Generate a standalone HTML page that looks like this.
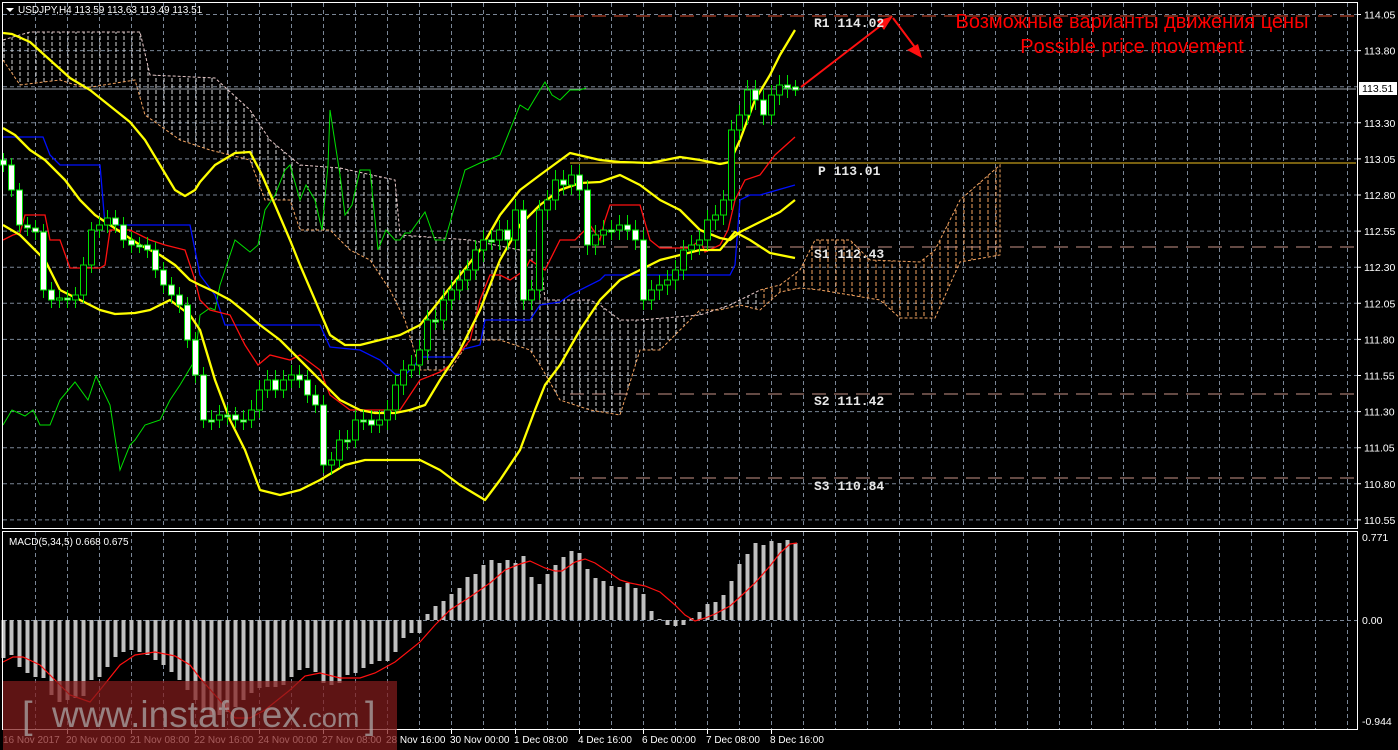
<!DOCTYPE html>
<html><head><meta charset="utf-8"><style>
html,body{margin:0;padding:0;background:#000;}
svg{display:block}
.s{font-family:"Liberation Sans",sans-serif;}
.m{font-family:"Liberation Mono",monospace;font-weight:bold;font-size:13px;fill:#e8e8e8;}
</style></head><body>
<svg width="1398" height="750" viewBox="0 0 1398 750" xmlns="http://www.w3.org/2000/svg">
<defs>
<pattern id="cl" width="8" height="6" patternUnits="userSpaceOnUse">
<line x1="4" y1="0" x2="4" y2="4" stroke="#d8d8d8" stroke-width="1"/>
</pattern>
<pattern id="cl2" width="8" height="6" patternUnits="userSpaceOnUse">
<line x1="4" y1="0" x2="4" y2="4" stroke="#f4a460" stroke-width="1"/>
</pattern>
</defs>
<rect width="1398" height="750" fill="#000"/>
<g stroke="#7a8696" stroke-width="1" stroke-dasharray="4,3">
<path d="M3 14.5H1357M3 50.6H1357M3 86.7H1357M3 122.8H1357M3 158.9H1357M3 195H1357M3 231.1H1357M3 267.2H1357M3 303.3H1357M3 339.4H1357M3 375.5H1357M3 411.6H1357M3 447.7H1357M3 483.8H1357M3 519.9H1357M3 620.5H1357"/>
<path d="M35.5 3V528M67.5 3V528M99.5 3V528M131.5 3V528M163.5 3V528M195.5 3V528M227.5 3V528M259.5 3V528M291.5 3V528M323.5 3V528M355.5 3V528M387.5 3V528M419.5 3V528M451.5 3V528M483.5 3V528M515.5 3V528M547.5 3V528M579.5 3V528M611.5 3V528M643.5 3V528M675.5 3V528M707.5 3V528M739.5 3V528M771.5 3V528M803.5 3V528M835.5 3V528M867.5 3V528M899.5 3V528M931.5 3V528M963.5 3V528M995.5 3V528M1027.5 3V528M1059.5 3V528M1091.5 3V528M1123.5 3V528M1155.5 3V528M1187.5 3V528M1219.5 3V528M1251.5 3V528M1283.5 3V528M1315.5 3V528M1347.5 3V528"/>
<path d="M35.5 532V729M67.5 532V729M99.5 532V729M131.5 532V729M163.5 532V729M195.5 532V729M227.5 532V729M259.5 532V729M291.5 532V729M323.5 532V729M355.5 532V729M387.5 532V729M419.5 532V729M451.5 532V729M483.5 532V729M515.5 532V729M547.5 532V729M579.5 532V729M611.5 532V729M643.5 532V729M675.5 532V729M707.5 532V729M739.5 532V729M771.5 532V729M803.5 532V729M835.5 532V729M867.5 532V729M899.5 532V729M931.5 532V729M963.5 532V729M995.5 532V729M1027.5 532V729M1059.5 532V729M1091.5 532V729M1123.5 532V729M1155.5 532V729M1187.5 532V729M1219.5 532V729M1251.5 532V729M1283.5 532V729M1315.5 532V729M1347.5 532V729"/>
</g>
<!-- cloud -->
<polygon fill="url(#cl)" fill-rule="evenodd" points="3,40 30,32 140,32 150,75 215,78 250,110 270,140 300,165 340,168 395,180 400,235 470,240 520,250 540,250 545,300 590,300 600,305 620,320 640,320 700,315 730,305 760,290 760,310 740,305 720,310 700,310 680,330 660,350 640,350 620,415 590,410 560,400 540,365 530,350 500,340 470,340 450,370 420,370 405,320 390,290 370,260 350,250 330,230 300,230 290,200 265,200 250,160 210,150 180,140 145,115 135,80 85,88 60,80 20,85 3,60"/>
<polygon fill="url(#cl2)" points="760,290 780,285 800,270 815,240 850,240 870,260 920,262 935,250 960,200 1000,165 1000,255 960,262 935,318 900,318 880,300 820,290 800,288 780,292 760,310"/>
<polyline fill="none" stroke="#e8c8c8" stroke-width="1" stroke-dasharray="3,2" points="3,40 30,32 140,32 150,75 215,78 250,110 270,140 300,165 340,168 395,180 400,235 470,240 520,250 540,250 545,300 590,300 600,305 620,320 640,320 700,315 730,305 760,290"/>
<polyline fill="none" stroke="#f4a460" stroke-width="1" stroke-dasharray="3,2" points="3,60 20,85 60,80 85,88 135,80 145,115 180,140 210,150 250,160 265,200 290,200 300,230 330,230 350,250 370,260 390,290 405,320 420,370 450,370 470,340 500,340 530,350 540,365 560,400 590,410 620,415 640,350 660,350 680,330 700,310 720,310 740,305 760,310 780,292 800,288 820,290 880,300 900,318 935,318 960,262 1000,255 1000,165 960,200 935,250 920,262 870,260 850,240 815,240 800,270 780,285 760,290"/>
<!-- pivots -->
<line x1="570" y1="16" x2="1356" y2="16" stroke="#e05030" stroke-dasharray="14,8"/>
<line x1="570" y1="163" x2="1356" y2="163" stroke="#f0c020"/>
<line x1="570" y1="247" x2="1356" y2="247" stroke="#c89488" stroke-dasharray="14,8"/>
<line x1="570" y1="394" x2="1356" y2="394" stroke="#c89488" stroke-dasharray="14,8"/>
<line x1="570" y1="478" x2="1356" y2="478" stroke="#c89488" stroke-dasharray="14,8"/>
<line x1="2" y1="89" x2="1356" y2="89" stroke="#9aa0a8"/>
<!-- green chikou -->
<polyline fill="none" stroke="#00e000" stroke-width="1" points="3,425 12,410 25,416 33,410 40,425 50,425 60,400 75,382 88,400 96,376 110,405 120,470 130,445 135,440 145,425 160,420 170,400 180,385 195,360 200,315 210,308 215,310 220,285 235,240 250,252 258,245 265,210 275,195 285,170 290,165 300,200 306,185 315,200 322,230 328,165 330,110 340,175 345,215 352,205 360,170 370,170 378,250 386,230 395,240 400,240 405,233 410,233 425,212 435,240 445,240 465,170 480,163 500,155 520,105 528,110 540,90 545,82 552,95 560,100 570,90 580,90 586,88"/>
<!-- blue kijun -->
<polyline fill="none" stroke="#0010ff" stroke-width="1.3" points="3,137 43,137 50,155 60,165 100,165 105,225 190,225 200,275 215,295 225,325 320,325 330,347 360,350 380,360 395,374 405,375 415,365 420,357 455,357 460,350 480,345 485,320 530,320 540,305 560,302 570,295 600,280 605,275 730,275 735,265 740,200 750,195 760,195 795,185"/>
<!-- red tenkan -->
<polyline fill="none" stroke="#ff1010" stroke-width="1.3" points="3,240 13,235 20,233 25,215 45,215 50,240 60,240 70,268 100,268 105,265 110,230 130,230 150,240 165,245 185,250 195,280 200,300 210,310 230,315 245,345 258,365 270,355 290,360 300,355 320,370 330,395 350,410 380,410 400,410 420,380 440,372 450,365 458,355 470,340 480,300 490,275 500,275 510,280 525,270 530,260 545,270 560,240 575,240 590,225 600,240 605,220 610,205 640,205 650,240 660,248 690,248 700,240 705,252 720,245 728,230 735,200 745,180 760,175 775,155 795,137"/>
<!-- bollinger -->
<g fill="none" stroke="#ffff00" stroke-width="2.3" stroke-linejoin="round">
<polyline points="3,33 12,34 30,42 50,60 70,78 90,90 100,98 115,110 130,122 145,140 160,165 175,190 185,196 195,190 200,182 215,165 235,153 250,152 262,175 275,205 290,240 300,265 315,300 330,335 345,345 360,345 380,340 400,335 420,325 440,300 460,275 480,250 500,215 520,190 540,175 570,153 600,160 620,162 650,163 680,157 700,160 720,164 730,162 740,140 755,100 770,75 780,55 795,30"/>
<polyline points="3,128 15,135 30,150 45,160 55,170 65,180 80,200 95,215 110,225 125,235 140,245 160,255 175,265 190,280 200,285 215,292 230,300 245,312 260,325 280,340 300,360 320,380 340,400 360,410 375,413 395,413 410,410 425,405 440,380 460,350 480,310 500,260 520,225 540,205 560,190 580,183 600,182 620,175 640,185 660,200 680,210 700,230 720,238 730,240 740,232 760,222 780,212 795,200"/>
<polyline points="3,225 20,235 35,250 45,260 60,290 80,300 100,310 115,314 135,313 150,310 170,300 190,315 200,330 215,380 230,420 245,450 260,490 280,495 300,490 320,480 345,465 365,460 390,460 420,460 440,470 460,485 485,500 500,480 520,450 535,410 545,385 560,365 580,330 600,300 620,280 640,270 660,260 680,255 700,250 720,250 735,232 750,240 770,253 795,258"/>
</g>
<!-- candles -->
<path fill="none" stroke="#00e000" stroke-width="1" d="M3.5 153V172M11.5 158V197M19.5 183V232M27.5 217V236M35.5 220V240M43.5 224V298M51.5 282V308M59.5 290V308M67.5 290V308M75.5 287V308M83.5 257V303M91.5 222V273M99.5 217V238M107.5 210V233M115.5 210V233M123.5 217V248M131.5 232V253M139.5 237V253M147.5 237V258M155.5 242V278M163.5 262V293M171.5 277V303M179.5 287V313M187.5 297V348M195.5 332V383M203.5 367V428M211.5 410V430M219.5 405V428M227.5 405V425M235.5 407V428M243.5 410V430M251.5 400V428M259.5 380V418M267.5 370V398M275.5 370V398M283.5 370V398M291.5 365V388M299.5 365V388M307.5 370V403M315.5 385V413M323.5 395V473M331.5 452V475M339.5 430V468M347.5 430V450M355.5 410V448M363.5 410V430M371.5 410V433M379.5 410V433M387.5 400V430M395.5 375V420M403.5 360V395M411.5 355V378M419.5 340V375M427.5 310V360M435.5 310V330M443.5 290V330M451.5 280V310M459.5 270V300M467.5 260V290M475.5 240V280M483.5 230V262M491.5 230V250M499.5 220V250M507.5 220V250M515.5 200V250M523.5 200V310M531.5 280V310M539.5 200V300M547.5 190V220M555.5 170V210M563.5 170V195M571.5 165V195M579.5 165V200M587.5 180V255M595.5 225V255M603.5 220V245M611.5 220V240M619.5 215V240M627.5 215V240M635.5 220V250M643.5 230V310M651.5 280V310M659.5 275V300M667.5 270V295M675.5 260V290M683.5 240V280M691.5 235V260M699.5 230V255M707.5 210V250M715.5 205V230M723.5 190V225M731.5 120V210M739.5 105V140M747.5 80V125M755.5 80V110M763.5 90V125M771.5 85V125M779.5 75V105M787.5 75V98M795.5 80V96"/>
<g fill="#fff" stroke="#00e000" stroke-width="1">
<rect x="0.5" y="160" width="6" height="5"/><rect x="8.5" y="165" width="6" height="25"/><rect x="16.5" y="190" width="6" height="35"/><rect x="24.5" y="225" width="6" height="3"/><rect x="32.5" y="228" width="6" height="4"/><rect x="40.5" y="232" width="6" height="58"/><rect x="48.5" y="290" width="6" height="10"/><rect x="64.5" y="298" width="6" height="2"/><rect x="112.5" y="218" width="6" height="7"/><rect x="120.5" y="225" width="6" height="15"/><rect x="128.5" y="240" width="6" height="5"/><rect x="136.5" y="245" width="6" height="2"/><rect x="144.5" y="245" width="6" height="5"/><rect x="152.5" y="250" width="6" height="20"/><rect x="160.5" y="270" width="6" height="15"/><rect x="168.5" y="285" width="6" height="10"/><rect x="176.5" y="295" width="6" height="10"/><rect x="184.5" y="305" width="6" height="35"/><rect x="192.5" y="340" width="6" height="35"/><rect x="200.5" y="375" width="6" height="45"/><rect x="208.5" y="420" width="6" height="2"/><rect x="224.5" y="415" width="6" height="2"/><rect x="232.5" y="415" width="6" height="5"/><rect x="240.5" y="420" width="6" height="2"/><rect x="272.5" y="380" width="6" height="10"/><rect x="296.5" y="375" width="6" height="5"/><rect x="304.5" y="380" width="6" height="15"/><rect x="312.5" y="395" width="6" height="10"/><rect x="320.5" y="405" width="6" height="60"/><rect x="344.5" y="440" width="6" height="2"/><rect x="360.5" y="420" width="6" height="2"/><rect x="368.5" y="420" width="6" height="5"/><rect x="432.5" y="320" width="6" height="2"/><rect x="488.5" y="240" width="6" height="2"/><rect x="504.5" y="230" width="6" height="10"/><rect x="520.5" y="210" width="6" height="90"/><rect x="560.5" y="180" width="6" height="5"/><rect x="576.5" y="175" width="6" height="15"/><rect x="584.5" y="190" width="6" height="55"/><rect x="608.5" y="230" width="6" height="2"/><rect x="624.5" y="225" width="6" height="5"/><rect x="632.5" y="230" width="6" height="10"/><rect x="640.5" y="240" width="6" height="60"/><rect x="752.5" y="90" width="6" height="10"/><rect x="760.5" y="100" width="6" height="15"/><rect x="784.5" y="85" width="6" height="3"/><rect x="792.5" y="87" width="6" height="3"/>
</g>
<g fill="#000" stroke="#00e000" stroke-width="1">
<rect x="56.5" y="298" width="6" height="2"/><rect x="72.5" y="295" width="6" height="5"/><rect x="80.5" y="265" width="6" height="30"/><rect x="88.5" y="230" width="6" height="35"/><rect x="96.5" y="225" width="6" height="5"/><rect x="104.5" y="218" width="6" height="7"/><rect x="216.5" y="415" width="6" height="5"/><rect x="248.5" y="410" width="6" height="10"/><rect x="256.5" y="390" width="6" height="20"/><rect x="264.5" y="380" width="6" height="10"/><rect x="280.5" y="380" width="6" height="10"/><rect x="288.5" y="375" width="6" height="5"/><rect x="328.5" y="460" width="6" height="5"/><rect x="336.5" y="440" width="6" height="20"/><rect x="352.5" y="420" width="6" height="20"/><rect x="376.5" y="420" width="6" height="5"/><rect x="384.5" y="410" width="6" height="10"/><rect x="392.5" y="385" width="6" height="25"/><rect x="400.5" y="370" width="6" height="15"/><rect x="408.5" y="365" width="6" height="5"/><rect x="416.5" y="350" width="6" height="15"/><rect x="424.5" y="320" width="6" height="30"/><rect x="440.5" y="300" width="6" height="20"/><rect x="448.5" y="290" width="6" height="10"/><rect x="456.5" y="280" width="6" height="10"/><rect x="464.5" y="270" width="6" height="10"/><rect x="472.5" y="250" width="6" height="20"/><rect x="480.5" y="240" width="6" height="10"/><rect x="496.5" y="230" width="6" height="10"/><rect x="512.5" y="210" width="6" height="30"/><rect x="528.5" y="290" width="6" height="10"/><rect x="536.5" y="210" width="6" height="80"/><rect x="544.5" y="200" width="6" height="10"/><rect x="552.5" y="180" width="6" height="20"/><rect x="568.5" y="175" width="6" height="10"/><rect x="592.5" y="235" width="6" height="10"/><rect x="600.5" y="230" width="6" height="5"/><rect x="616.5" y="225" width="6" height="5"/><rect x="648.5" y="290" width="6" height="10"/><rect x="656.5" y="285" width="6" height="5"/><rect x="664.5" y="280" width="6" height="5"/><rect x="672.5" y="270" width="6" height="10"/><rect x="680.5" y="250" width="6" height="20"/><rect x="688.5" y="245" width="6" height="5"/><rect x="696.5" y="240" width="6" height="5"/><rect x="704.5" y="220" width="6" height="20"/><rect x="712.5" y="215" width="6" height="5"/><rect x="720.5" y="200" width="6" height="15"/><rect x="728.5" y="130" width="6" height="70"/><rect x="736.5" y="115" width="6" height="15"/><rect x="744.5" y="90" width="6" height="25"/><rect x="768.5" y="95" width="6" height="20"/><rect x="776.5" y="85" width="6" height="10"/>
</g>
<!-- arrows -->
<g stroke="#ff1010" stroke-width="2" fill="#ff1010">
<line x1="801" y1="87" x2="888" y2="20"/>
<polygon points="893,16 877,21 884,30" stroke="none"/>
<line x1="893" y1="18" x2="920" y2="54"/>
<polygon points="922,58 907,50 918,44" stroke="none"/>
</g>
<text class="s" x="1132" y="28" fill="#ff0000" font-size="20" text-anchor="middle">Возможные варианты движения цены</text>
<text class="s" x="1132" y="53" fill="#ff0000" font-size="20" text-anchor="middle">Possible price movement</text>
<text class="m" x="814" y="27">R1 114.02</text>
<text class="m" x="818" y="175">P 113.01</text>
<text class="m" x="814" y="258">S1 112.43</text>
<text class="m" x="814" y="405">S2 111.42</text>
<text class="m" x="814" y="490">S3 110.84</text>
<!-- macd -->
<g fill="#c0c0c0">
<rect x="1.5" y="620" width="4" height="38"/><rect x="9.5" y="620" width="4" height="35"/><rect x="17.5" y="620" width="4" height="47"/><rect x="25.5" y="620" width="4" height="53"/><rect x="33.5" y="620" width="4" height="57"/><rect x="41.5" y="620" width="4" height="58"/><rect x="49.5" y="620" width="4" height="75"/><rect x="57.5" y="620" width="4" height="82"/><rect x="65.5" y="620" width="4" height="80"/><rect x="73.5" y="620" width="4" height="78"/><rect x="81.5" y="620" width="4" height="76"/><rect x="89.5" y="620" width="4" height="60"/><rect x="97.5" y="620" width="4" height="57"/><rect x="105.5" y="620" width="4" height="47"/><rect x="113.5" y="620" width="4" height="37"/><rect x="121.5" y="620" width="4" height="32"/><rect x="129.5" y="620" width="4" height="30"/><rect x="137.5" y="620" width="4" height="32"/><rect x="145.5" y="620" width="4" height="35"/><rect x="153.5" y="620" width="4" height="40"/><rect x="161.5" y="620" width="4" height="45"/><rect x="169.5" y="620" width="4" height="52"/><rect x="177.5" y="620" width="4" height="60"/><rect x="185.5" y="620" width="4" height="70"/><rect x="193.5" y="620" width="4" height="80"/><rect x="201.5" y="620" width="4" height="90"/><rect x="209.5" y="620" width="4" height="95"/><rect x="217.5" y="620" width="4" height="95"/><rect x="225.5" y="620" width="4" height="92"/><rect x="233.5" y="620" width="4" height="87"/><rect x="241.5" y="620" width="4" height="80"/><rect x="249.5" y="620" width="4" height="73"/><rect x="257.5" y="620" width="4" height="68"/><rect x="265.5" y="620" width="4" height="67"/><rect x="273.5" y="620" width="4" height="67"/><rect x="281.5" y="620" width="4" height="65"/><rect x="289.5" y="620" width="4" height="57"/><rect x="297.5" y="620" width="4" height="50"/><rect x="305.5" y="620" width="4" height="48"/><rect x="313.5" y="620" width="4" height="52"/><rect x="321.5" y="620" width="4" height="63"/><rect x="329.5" y="620" width="4" height="65"/><rect x="337.5" y="620" width="4" height="63"/><rect x="345.5" y="620" width="4" height="55"/><rect x="353.5" y="620" width="4" height="53"/><rect x="361.5" y="620" width="4" height="48"/><rect x="369.5" y="620" width="4" height="44"/><rect x="377.5" y="620" width="4" height="41"/><rect x="385.5" y="620" width="4" height="41"/><rect x="393.5" y="620" width="4" height="32"/><rect x="401.5" y="620" width="4" height="18"/><rect x="409.5" y="620" width="4" height="13"/><rect x="417.5" y="620" width="4" height="13"/>
<rect x="425.5" y="614" width="4" height="6"/><rect x="433.5" y="606" width="4" height="14"/><rect x="441.5" y="601" width="4" height="19"/><rect x="449.5" y="594" width="4" height="26"/><rect x="457.5" y="588" width="4" height="32"/><rect x="465.5" y="577" width="4" height="43"/><rect x="473.5" y="574" width="4" height="46"/><rect x="481.5" y="565" width="4" height="55"/><rect x="489.5" y="560" width="4" height="60"/><rect x="497.5" y="563" width="4" height="57"/><rect x="505.5" y="560" width="4" height="60"/><rect x="513.5" y="563" width="4" height="57"/><rect x="521.5" y="556" width="4" height="64"/><rect x="529.5" y="577" width="4" height="43"/><rect x="537.5" y="584" width="4" height="36"/><rect x="545.5" y="574" width="4" height="46"/><rect x="553.5" y="565" width="4" height="55"/><rect x="561.5" y="557" width="4" height="63"/><rect x="569.5" y="551" width="4" height="69"/><rect x="577.5" y="553" width="4" height="67"/><rect x="585.5" y="569" width="4" height="51"/><rect x="593.5" y="578" width="4" height="42"/><rect x="601.5" y="581" width="4" height="39"/><rect x="609.5" y="586" width="4" height="34"/><rect x="617.5" y="587" width="4" height="33"/><rect x="625.5" y="583" width="4" height="37"/><rect x="633.5" y="588" width="4" height="32"/><rect x="641.5" y="594" width="4" height="26"/><rect x="649.5" y="611" width="4" height="9"/><rect x="657.5" y="619" width="4" height="1"/><rect x="665.5" y="620" width="4" height="5"/><rect x="673.5" y="620" width="4" height="6"/><rect x="681.5" y="620" width="4" height="5"/><rect x="689.5" y="618" width="4" height="2"/><rect x="697.5" y="612" width="4" height="8"/><rect x="705.5" y="604" width="4" height="16"/><rect x="713.5" y="602" width="4" height="18"/><rect x="721.5" y="595" width="4" height="25"/><rect x="729.5" y="581" width="4" height="39"/><rect x="737.5" y="564" width="4" height="56"/><rect x="745.5" y="554" width="4" height="66"/><rect x="753.5" y="543" width="4" height="77"/><rect x="761.5" y="545" width="4" height="75"/><rect x="769.5" y="541" width="4" height="79"/><rect x="777.5" y="543" width="4" height="77"/><rect x="785.5" y="540" width="4" height="80"/><rect x="793.5" y="543" width="4" height="77"/>
</g>
<polyline fill="none" stroke="#ff1010" stroke-width="1.2" points="3,662 13,657 23,657 40,665 55,680 70,695 90,702 100,690 120,665 135,655 155,652 175,656 190,665 200,678 215,695 235,718 250,718 265,710 290,690 305,676 320,673 340,678 360,678 375,673 395,662 420,642 435,625 450,610 470,597 490,583 505,570 520,564 530,561 545,568 555,571 562,571 575,562 585,559 595,563 610,573 620,580 630,583 645,586 660,592 675,605 685,615 695,621 705,618 715,614 730,606 740,597 755,583 770,566 780,553 790,544 797,543"/>
<!-- frames -->
<rect x="2.5" y="2.5" width="1355" height="526" fill="none" stroke="#fff"/>
<rect x="2.5" y="531.5" width="1355" height="198" fill="none" stroke="#fff"/>
<g class="s" fill="#fff" font-size="10.5">
<text x="1364" y="18.5">114.05</text><text x="1364" y="54.6">113.80</text><text x="1364" y="126.8">113.30</text><text x="1364" y="162.9">113.05</text><text x="1364" y="199">112.80</text><text x="1364" y="235.1">112.55</text><text x="1364" y="271.2">112.30</text><text x="1364" y="307.3">112.05</text><text x="1364" y="343.4">111.80</text><text x="1364" y="379.5">111.55</text><text x="1364" y="415.6">111.30</text><text x="1364" y="451.7">111.05</text><text x="1364" y="487.8">110.80</text><text x="1364" y="523.9">110.55</text>
<text x="1362" y="541">0.771</text><text x="1362" y="624">0.00</text><text x="1362" y="725">-0.944</text>
</g>
<g class="s" fill="#fff" font-size="10">
<text x="3" y="743">16 Nov 2017</text><text x="66" y="743">20 Nov 00:00</text><text x="130" y="743">21 Nov 08:00</text><text x="194" y="743">22 Nov 16:00</text><text x="258" y="743">24 Nov 00:00</text><text x="322" y="743">27 Nov 08:00</text><text x="386" y="743">28 Nov 16:00</text><text x="450" y="743">30 Nov 00:00</text><text x="514" y="743">1 Dec 08:00</text><text x="578" y="743">4 Dec 16:00</text><text x="642" y="743">6 Dec 00:00</text><text x="706" y="743">7 Dec 08:00</text><text x="770" y="743">8 Dec 16:00</text>
</g>
<path stroke="#fff" d="M67.5 729V734M131.5 729V734M195.5 729V734M259.5 729V734M323.5 729V734M387.5 729V734M451.5 729V734M515.5 729V734M579.5 729V734M643.5 729V734M707.5 729V734M771.5 729V734M1357 14.5H1361M1357 50.6H1361M1357 122.8H1361M1357 158.9H1361M1357 195H1361M1357 231.1H1361M1357 267.2H1361M1357 303.3H1361M1357 339.4H1361M1357 375.5H1361M1357 411.6H1361M1357 447.7H1361M1357 483.8H1361M1357 519.9H1361"/>
<rect x="1359" y="82" width="38" height="13" fill="#fff"/>
<text class="s" x="1362" y="92" font-size="10.5" fill="#000">113.51</text>
<text class="s" x="9" y="545" font-size="10" fill="#fff">MACD(5,34,5) 0.668 0.675</text>
<polygon points="6,8 14,8 10,12" fill="#fff"/>
<text class="s" x="18" y="13" font-size="10" fill="#fff">USDJPY,H4  113.59 113.63 113.49 113.51</text>
<!-- watermark -->
<rect x="3" y="681" width="394" height="69" fill="rgba(130,28,28,0.72)"/>
<text class="s" x="22" y="728" font-size="38" fill="rgba(175,175,175,0.7)">[</text>
<text class="s" x="52" y="727" font-size="37" fill="rgba(175,175,175,0.7)">www.instaforex<tspan font-size="27">.com</tspan></text>
<text class="s" x="365" y="728" font-size="38" fill="rgba(175,175,175,0.7)">]</text>
</svg>
</body></html>
